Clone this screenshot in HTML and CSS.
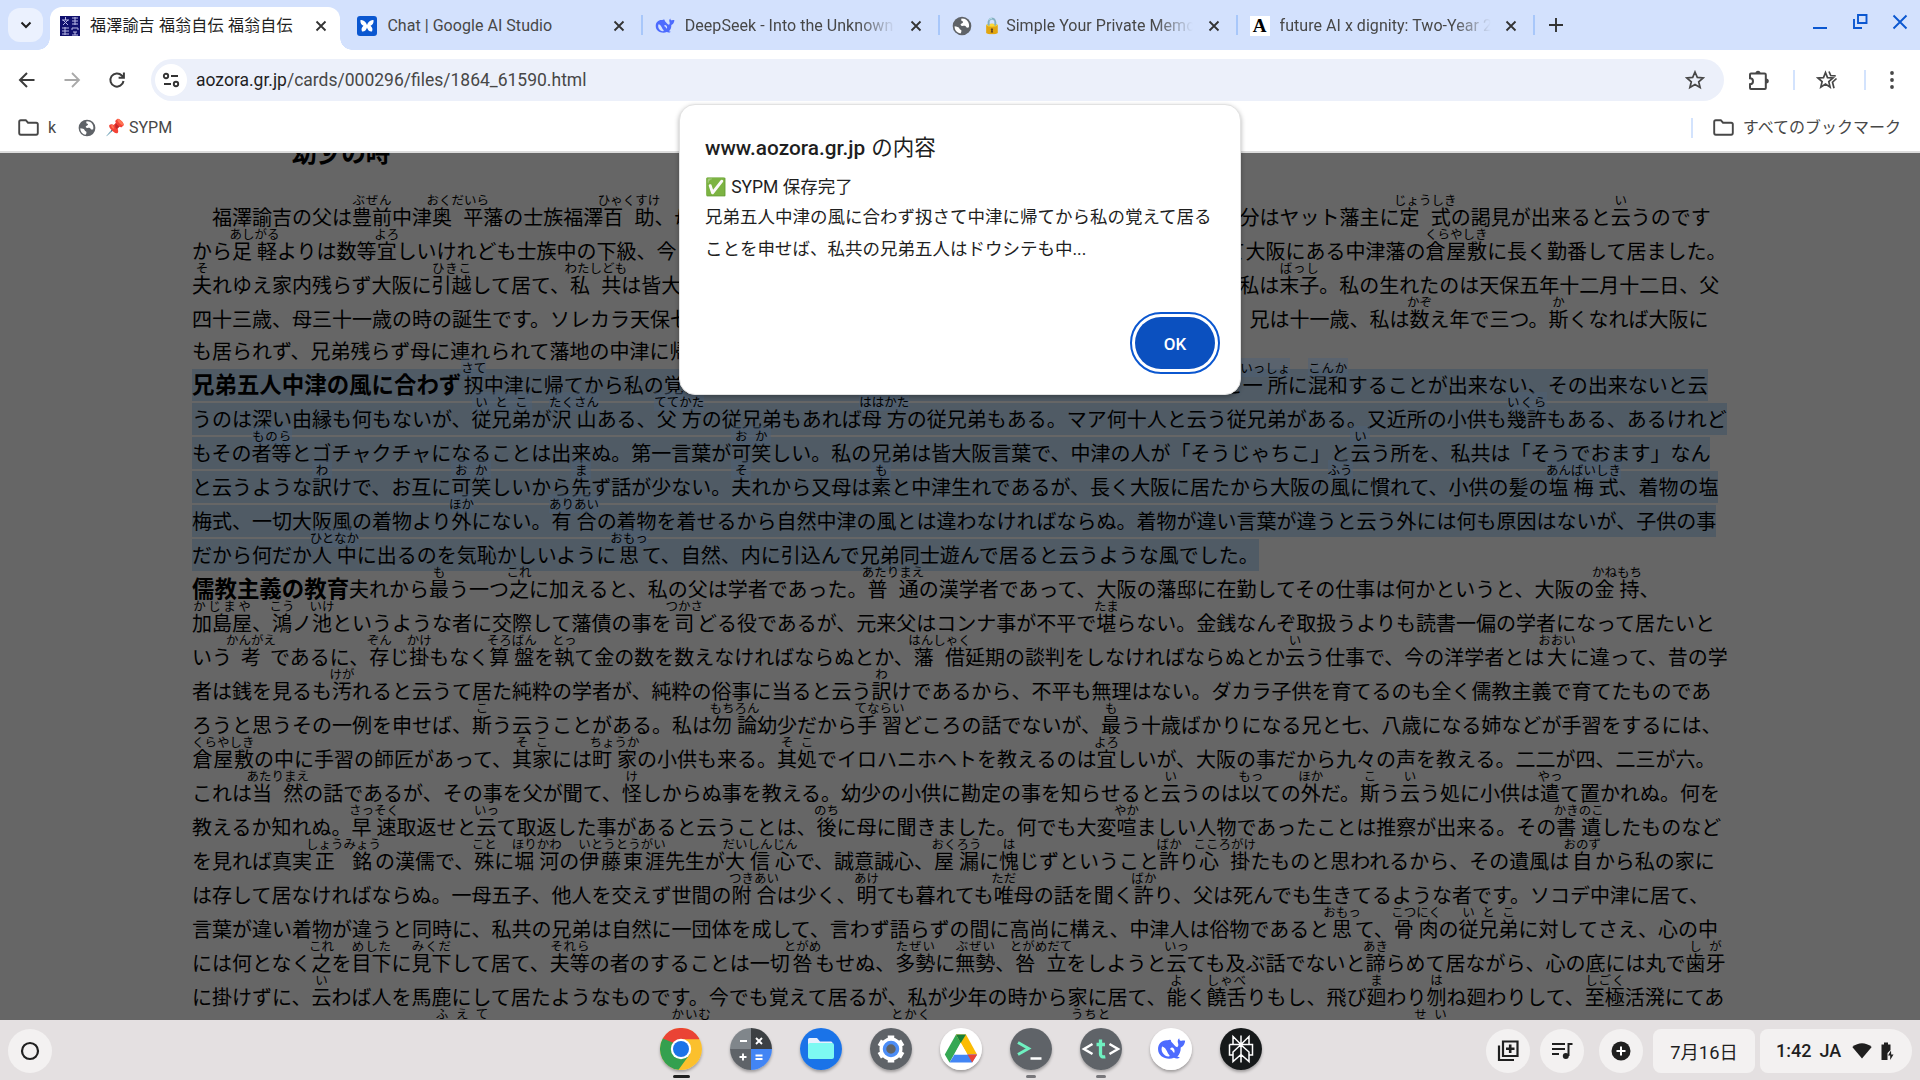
FILE: index.html
```html
<!DOCTYPE html>
<html lang="ja">
<head>
<meta charset="utf-8">
<title>福澤諭吉 福翁自伝</title>
<link rel="stylesheet" href="styles.css">
</head>
<body>
<svg class="defs" width="0" height="0">
  <symbol id="close" viewBox="0 0 12 12"><path d="M1.5 1.5l9 9M10.5 1.5l-9 9" stroke="currentColor" stroke-width="1.8" fill="none"/></symbol>
  <symbol id="globe" viewBox="0 0 20 20"><circle cx="10" cy="10" r="9.3" fill="#5f6368"/><path d="M2.6 10.2c2 .4 4.4.6 4.8 2.200c.3 1.400 2.200.8 2 2.500-.1 1.200-.3 1.700-1 2.500C4.800 16.800 2.400 13.800 2.600 10.200zM9.500 2.600c-.6 1.500-.3 2.500 1 2.700 1.200.2.500 1.900-.8 2.200-1.700.3-1.300 2.300.3 2.400 2 .1 3.200-.6 4 .8.700 1.300 1.800 1 2.900.6.900-3.600-1.200-7.600-4.700-8.500z" fill="#fff"/></symbol>
  <symbol id="folder" viewBox="0 0 21 17"><path d="M2.800 1.200h5l2.200 2.500h8.200q1.600 0 1.600 1.600v8.800q0 1.600-1.600 1.600H2.800q-1.600 0-1.600-1.600V2.800q0-1.600 1.600-1.600z" fill="none" stroke="#474747" stroke-width="1.9"/></symbol>
  <symbol id="whale" viewBox="0 0 28 24"><path d="M1 12C1 6.500 5 3 10 3.500c1 .1 2-.8 3.200-.3.8.5 0 1.300.8 2 2.500 2.300 3.300 4.300 5.500 5 1.400-.8 1.300-2.600.7-4.200-.6-1.800.2-4 1.300-4.500 0 2 1 2.900 2.500 2.500 1.200-.4 2.200-.2 3.200 0-.4 3.200-1.700 5.500-4.300 6.500.1 4-1.200 6.800-3.300 8.800 1 .5 1.700.6 2.500.7-1.500 1.600-4 1.300-5.700.5C10 23 1 20 1 12zM5 9.500c-2 4 1.500 9.500 6 9.700 2 .1 1.200-1 .2-2.200C9.500 14.500 8.500 10.200 5 9.500zm9.500 1c-1.500 0-2 1.200-1.500 2 1.800.3 2.200 2.200 3.500 3.300.8-1 .8-4.800-2-5.300z" fill="#4d6bfe" fill-rule="evenodd"/></symbol>
</svg>

<header class="tabstrip">
  <button class="tabsearch"><svg width="12" height="8" viewBox="0 0 12 8"><path d="M1.500 1.500L6 6l4.500-4.500" fill="none" stroke="#1f1f1f" stroke-width="2"/></svg></button>
  <div class="tab active">
    <svg class="fav" viewBox="0 0 20 20"><rect width="20" height="20" fill="#10106e"/><path d="M2 4h7M5.500 1v3M3 9l5-5M3 4l5 5M12 2h6M12 5h6M12 8h6M15 1v8M2 12h7M2 15h7M5 11v8M2 18h7M12 12h6v2M12 12v2M13 16h4M15 16v3M12 19h6" stroke="#b9b9e6" stroke-width="1" fill="none"/></svg>
    <span class="title">福澤諭吉 福翁自伝 福翁自伝</span><svg class="x"><use href="#close"/></svg>
  </div>
  <div class="tab">
    <svg class="fav" viewBox="0 0 20 20"><rect width="20" height="20" rx="3" fill="#0b57d0"/><path d="M3.500 4c3-.5 5.500 2 6.500 5 1-3 3.500-5.500 6.500-5 .5 3-1 5-3 5.700 1.800 1.300 2.500 3.500 1.500 5.800-2.500.3-4.500-1.500-5-4-.5 2.500-2.500 4.300-5 4-1-2.300-.3-4.500 1.500-5.800-2-.7-3.500-2.700-3-5.700z" fill="#fff"/></svg>
    <span class="title">Chat | Google AI Studio</span><svg class="x"><use href="#close"/></svg>
  </div>
  <div class="tab sep">
    <svg class="fav" viewBox="0 0 28 24"><use href="#whale"/></svg>
    <span class="title fade">DeepSeek - Into the Unknown</span><svg class="x"><use href="#close"/></svg>
  </div>
  <div class="tab sep">
    <svg class="fav" viewBox="0 0 20 20"><use href="#globe"/></svg>
    <span class="title fade">🔒 Simple Your Private Memory</span><svg class="x"><use href="#close"/></svg>
  </div>
  <div class="tab sep last">
    <span class="fav letter">A</span>
    <span class="title fade">future AI x dignity: Two-Year 2025</span><svg class="x"><use href="#close"/></svg>
  </div>
  <svg class="plus" width="14" height="14" viewBox="0 0 14 14"><path d="M7 0v14M0 7h14" stroke="#333" stroke-width="1.900"/></svg>
  <div class="winbtns">
    <svg width="16" height="18" viewBox="0 0 16 18"><path d="M1 15h14" stroke="#0b57d0" stroke-width="2"/></svg>
    <svg width="16" height="18" viewBox="0 0 16 18"><path d="M6 2h8.500v8H6zM2 6v9h8" fill="none" stroke="#0b57d0" stroke-width="1.900"/></svg>
    <svg width="16" height="18" viewBox="0 0 16 18"><path d="M1.500 2.500l13 13M14.500 2.500l-13 13" stroke="#0b57d0" stroke-width="1.900"/></svg>
  </div>
</header>

<div class="toolbar">
  <svg class="nav" viewBox="0 0 18 18"><path d="M9 2L2 9l7 7M2 9h14.500" fill="none" stroke="#3c3c3c" stroke-width="2"/></svg>
  <svg class="nav" viewBox="0 0 18 18"><path d="M9 2l7 7-7 7M16 9H1.500" fill="none" stroke="#a9a9a9" stroke-width="1.800"/></svg>
  <svg class="nav" viewBox="0 0 18 18"><path d="M15.500 10A6.600 6.600 0 1 1 13.800 4.500L15.500 6.200M15.900 1.500v5.300h-5.300" fill="none" stroke="#3c3c3c" stroke-width="2"/></svg>
  <div class="omnibox">
    <span class="siteinfo"><svg width="18" height="16" viewBox="0 0 18 16"><g fill="none" stroke="#333" stroke-width="1.900"><circle cx="4" cy="4" r="2.200"/><path d="M9 4h7M2 12h7"/><circle cx="14" cy="12" r="2.200"/></g></svg></span>
    <span class="url"><b>aozora.gr.jp</b>/cards/000296/files/1864_61590.html</span>
    <svg width="20" height="20" viewBox="0 0 20 20"><path d="M10 2l2.300 5.400 5.900.5-4.500 3.900 1.400 5.700-5.100-3.100-5.100 3.100 1.400-5.700L1.800 7.900l5.900-.5z" fill="none" stroke="#474747" stroke-width="1.700"/></svg>
  </div>
  <div class="tools">
    <svg width="22" height="22" viewBox="0 0 22 22"><path d="M3 4.500h13.500q1.300 0 1.300 1.300V19q0 1-1 1H3q-1 0-1-1v-3.800c4 0 4-6 0-6V5.500q0-1 1-1z" fill="none" stroke="#474747" stroke-width="2"/><path d="M7.500 4.500a2.500 2.800 0 0 1 5 0zM18 9.500a2.800 2.500 0 0 1 0 5z" fill="#474747"/></svg>
    <i></i>
    <svg class="starlist" width="22" height="20" viewBox="0 0 22 20"><path d="M9.500 2.500l2 5.100 5.500.4-4.200 3.600 1.300 5.500-4.600-3-4.700 3 1.300-5.500L2 8l5.500-.4z" fill="none" stroke="#474747" stroke-width="1.700"/><path d="M13 1.500l1.700 4 5 .4M20.500 8.500l-4 3.700 1.500 6" fill="none" stroke="#474747" stroke-width="1.700"/></svg>
    <i></i>
    <svg width="6" height="20" viewBox="0 0 6 20"><g fill="#474747"><circle cx="3" cy="3" r="1.900"/><circle cx="3" cy="10" r="1.900"/><circle cx="3" cy="17" r="1.900"/></g></svg>
  </div>
</div>

<div class="bookmarks">
  <svg width="21" height="17"><use href="#folder"/></svg><span class="bk1">k</span>
  <svg class="bkglobe" width="18" height="18" viewBox="0 0 20 20"><use href="#globe"/></svg><span>📌 SYPM</span>
  <div class="allbk"><i></i><svg width="21" height="17"><use href="#folder"/></svg><span>すべてのブックマーク</span></div>
</div>

<main class="page">
<h3>幼少の時</h3>
<div class="text">
<div class="line">　福澤諭吉の父は<ruby>豊前<rt>ぶぜん</rt></ruby>中津<ruby>奥平<rt>おくだいら</rt></ruby>藩の士族福澤<ruby>百助<rt>ひゃくすけ</rt></ruby>、母は同藩士族、橋本浜右衛門の長女、名を於順と申し、父の身<span class="g1"></span>分はヤット藩主に<ruby>定式<rt>じょうしき</rt></ruby>の謁見が出来ると<ruby>云<rt>い</rt></ruby>うのです</div>
<div class="line">から<ruby>足軽<rt>あしがる</rt></ruby>よりは数等<ruby>宜<rt>よろ</rt></ruby>しいけれども士族中の下級、今日で云えば判任官の家でしょう。藩で云う元締役を勤め<span class="g2"></span>て大阪にある中津藩の<ruby>倉屋敷<rt>くらやしき</rt></ruby>に長く勤番して居ました。</div>
<div class="line"><ruby>夫<rt>そ</rt></ruby>れゆえ家内残らず大阪に<ruby>引越<rt>ひきこ</rt></ruby>して居て、<ruby>私共<rt>わたしども</rt></ruby>は皆大阪で生れたのです。兄弟五人、総領の兄の次に女の子が三人、私は<ruby>末子<rt>ばっし</rt></ruby>。私の生れたのは天保五年十二月十二日、父</div>
<div class="line">四十三歳、母三十一歳の時の誕生です。ソレカラ天保七年六月、父が不幸にして病死。跡に遺るは母一人に子供五人、兄は十一歳、私は<ruby>数<rt>かぞ</rt></ruby>え年で三つ。<ruby>斯<rt>か</rt></ruby>くなれば大阪に</div>
<div class="line plain">も居られず、兄弟残らず母に連れられて藩地の中津に帰りました。</div>
<div class="line sel"><b>兄弟五人中津の風に合わず</b><ruby>扨<rt>さて</rt></ruby>中津に帰てから私の覚えて居ることを申せば、私共の兄弟五人はドウシテも中津人と<ruby>一所<rt>いっしょ</rt></ruby>に<ruby>混和<rt>こんか</rt></ruby>することが出来ない、その出来ないと云</div>
<div class="line sel">うのは深い由縁も何もないが、<ruby>従兄弟<rt>いとこ</rt></ruby>が<ruby>沢山<rt>たくさん</rt></ruby>ある、<ruby>父方<rt>ててかた</rt></ruby>の従兄弟もあれば<ruby>母方<rt>ははかた</rt></ruby>の従兄弟もある。マア何十人と云う従兄弟がある。又近所の小供も<ruby>幾許<rt>いくら</rt></ruby>もある、あるけれど</div>
<div class="line sel">もその<ruby>者等<rt>ものら</rt></ruby>とゴチャクチャになることは出来ぬ。第一言葉が<ruby>可笑<rt>おか</rt></ruby>しい。私の兄弟は皆大阪言葉で、中津の人が「そうじゃちこ」と<ruby>云<rt>い</rt></ruby>う所を、私共は「そうでおます」なん</div>
<div class="line sel">と云うような<ruby>訳<rt>わ</rt></ruby>けで、お互に<ruby>可笑<rt>おか</rt></ruby>しいから<ruby>先<rt>ま</rt></ruby>ず話が少ない。<ruby>夫<rt>そ</rt></ruby>れから又母は<ruby>素<rt>も</rt></ruby>と中津生れであるが、長く大阪に居たから大阪の<ruby>風<rt>ふう</rt></ruby>に慣れて、小供の髪の<ruby>塩梅式<rt>あんばいしき</rt></ruby>、着物の塩</div>
<div class="line sel">梅式、一切大阪風の着物より<ruby>外<rt>ほか</rt></ruby>にない。<ruby>有合<rt>ありあい</rt></ruby>の着物を着せるから自然中津の風とは違わなければならぬ。着物が違い言葉が違うと云う外には何も原因はないが、子供の事</div>
<div class="line sel">だから何だか<ruby>人中<rt>ひとなか</rt></ruby>に出るのを気恥かしいように<ruby>思<rt>おもっ</rt></ruby>て、自然、内に引込んで兄弟同士遊んで居ると云うような風でした。</div>
<div class="line"><b>儒教主義の教育</b>夫れから<ruby>最<rt>も</rt></ruby>う一つ<ruby>之<rt>これ</rt></ruby>に加えると、私の父は学者であった。<ruby>普通<rt>あたりまえ</rt></ruby>の漢学者であって、大阪の藩邸に在勤してその仕事は何かというと、大阪の<ruby>金持<rt>かねもち</rt></ruby>、</div>
<div class="line"><ruby>加島屋<rt>かじまや</rt></ruby>、<ruby>鴻<rt>こう</rt></ruby>ノ<ruby>池<rt>いけ</rt></ruby>というような者に交際して藩債の事を<ruby>司<rt>つかさ</rt></ruby>どる役であるが、元来父はコンナ事が不平で<ruby>堪<rt>たま</rt></ruby>らない。金銭なんぞ取扱うよりも読書一偏の学者になって居たいと</div>
<div class="line">いう<ruby>考<rt>かんがえ</rt></ruby>であるに、<ruby>存<rt>ぞん</rt></ruby>じ<ruby>掛<rt>かけ</rt></ruby>もなく<ruby>算盤<rt>そろばん</rt></ruby>を<ruby>執<rt>とっ</rt></ruby>て金の数を数えなければならぬとか、<ruby>藩借<rt>はんしゃく</rt></ruby>延期の談判をしなければならぬとか<ruby>云<rt>い</rt></ruby>う仕事で、今の洋学者とは<ruby>大<rt>おおい</rt></ruby>に違って、昔の学</div>
<div class="line">者は銭を見るも<ruby>汚<rt>けが</rt></ruby>れると云うて居た純粋の学者が、純粋の俗事に当ると云う<ruby>訳<rt>わ</rt></ruby>けであるから、不平も無理はない。ダカラ子供を育てるのも全く儒教主義で育てたものであ</div>
<div class="line">ろうと思うその一例を申せば、<ruby>斯<rt>こ</rt></ruby>う云うことがある。私は<ruby>勿論<rt>もちろん</rt></ruby>幼少だから<ruby>手習<rt>てならい</rt></ruby>どころの話でないが、<ruby>最<rt>も</rt></ruby>う十歳ばかりになる兄と七、八歳になる姉などが手習をするには、</div>
<div class="line"><ruby>倉屋敷<rt>くらやしき</rt></ruby>の中に手習の師匠があって、<ruby>其家<rt>そこ</rt></ruby>には<ruby>町家<rt>ちょうか</rt></ruby>の小供も来る。<ruby>其処<rt>そこ</rt></ruby>でイロハニホヘトを教えるのは<ruby>宜<rt>よろ</rt></ruby>しいが、大阪の事だから九々の声を教える。二二が四、二三が六。</div>
<div class="line">これは<ruby>当然<rt>あたりまえ</rt></ruby>の話であるが、その事を父が聞て、<ruby>怪<rt>け</rt></ruby>しからぬ事を教える。幼少の小供に勘定の事を知らせると<ruby>云<rt>い</rt></ruby>うのは<ruby>以<rt>もっ</rt></ruby>ての<ruby>外<rt>ほか</rt></ruby>だ。<ruby>斯<rt>こ</rt></ruby>う<ruby>云<rt>い</rt></ruby>う処に小供は<ruby>遣<rt>やっ</rt></ruby>て置かれぬ。何を</div>
<div class="line">教えるか知れぬ。<ruby>早速<rt>さっそく</rt></ruby>取返せと<ruby>云<rt>いっ</rt></ruby>て取返した事があると云うことは、<ruby>後<rt>のち</rt></ruby>に母に聞きました。何でも大変<ruby>喧<rt>やか</rt></ruby>ましい人物であったことは推察が出来る。その<ruby>書遺<rt>かきのこ</rt></ruby>したものなど</div>
<div class="line">を見れば真実<ruby>正銘<rt>しょうみょう</rt></ruby>の漢儒で、<ruby>殊<rt>こと</rt></ruby>に<ruby>堀河<rt>ほりかわ</rt></ruby>の<ruby>伊藤東涯<rt>いとうとうがい</rt></ruby>先生が<ruby>大信心<rt>だいしんじん</rt></ruby>で、誠意誠心、<ruby>屋漏<rt>おくろう</rt></ruby>に<ruby>愧<rt>は</rt></ruby>じずということ<ruby>許<rt>ばか</rt></ruby>り<ruby>心掛<rt>こころがけ</rt></ruby>たものと思われるから、その遺風は<ruby>自<rt>おのず</rt></ruby>から私の家に</div>
<div class="line">は存して居なければならぬ。一母五子、他人を交えず世間の<ruby>附合<rt>つきあい</rt></ruby>は少く、<ruby>明<rt>あけ</rt></ruby>ても暮れても<ruby>唯<rt>ただ</rt></ruby>母の話を聞く<ruby>許<rt>ばか</rt></ruby>り、父は死んでも生きてるような者です。ソコデ中津に居て、</div>
<div class="line">言葉が違い着物が違うと同時に、私共の兄弟は自然に一団体を成して、言わず語らずの間に高尚に構え、中津人は俗物であると<ruby>思<rt>おもっ</rt></ruby>て、<ruby>骨肉<rt>こつにく</rt></ruby>の<ruby>従兄弟<rt>いとこ</rt></ruby>に対してさえ、心の中</div>
<div class="line">には何となく<ruby>之<rt>これ</rt></ruby>を<ruby>目下<rt>めした</rt></ruby>に<ruby>見下<rt>みくだ</rt></ruby>して居て、<ruby>夫等<rt>それら</rt></ruby>の者のすることは一切<ruby>咎<rt>とがめ</rt></ruby>もせぬ、<ruby>多勢<rt>たぜい</rt></ruby>に<ruby>無勢<rt>ぶぜい</rt></ruby>、<ruby>咎立<rt>とがめだて</rt></ruby>をしようと<ruby>云<rt>いっ</rt></ruby>ても及ぶ話でないと<ruby>諦<rt>あき</rt></ruby>らめて居ながら、心の底には丸で<ruby>歯牙<rt>しが</rt></ruby></div>
<div class="line">に掛けずに、<ruby>云<rt>い</rt></ruby>わば人を馬鹿にして居たようなものです。今でも覚えて居るが、私が少年の時から家に居て、<ruby>能<rt>よ</rt></ruby>く<ruby>饒舌<rt>しゃべ</rt></ruby>りもし、飛び<ruby>廻<rt>ま</rt></ruby>わり<ruby>刎<rt>は</rt></ruby>ね廻わりして、<ruby>至極<rt>しごく</rt></ruby>活溌にてあ</div>
<div class="line">りながら、木に登ることが<ruby>不得手<rt>ふえて</rt></ruby>で、水を泳ぐことが<ruby>皆無<rt>かいむ</rt></ruby>出来ぬと云うのも、<ruby>兎角<rt>とかく</rt></ruby>同藩中の子弟と<ruby>打解<rt>うちと</rt></ruby>けて遊ぶことが出来ずに孤立した<ruby>所為<rt>せい</rt></ruby>でしょう。</div>
</div>
</main>

<div class="dialog">
  <h1><b>www.aozora.gr.jp</b><span>の内容</span></h1>
  <p class="ok-line">✅ SYPM 保存完了</p>
  <p>兄弟五人中津の風に合わず扨さて中津に帰てから私の覚えて居る<br>ことを申せば、私共の兄弟五人はドウシテも中...</p>
  <button class="okbtn">OK</button>
</div>

<footer class="shelf">
  <span class="launcher"><svg width="20" height="20" viewBox="0 0 20 20"><circle cx="10" cy="10" r="8" fill="none" stroke="#1f1f1f" stroke-width="2.200"/></svg></span>
  <div class="apps">
    <span class="app on"><svg viewBox="0 0 42 42"><circle cx="21" cy="21" r="21" fill="#fbc02d"/><path d="M21 21L2.800 10.500A21 21 0 0 0 18.500 41.850L30 26z" fill="#34a04f"/><path d="M2.800 10.500A21 21 0 0 1 39.200 10.500L39.200 11.200H21L12 17z" fill="#ea4335"/><path d="M2.800 10.500L11 25.500l4-10z" fill="#34a04f"/><circle cx="21" cy="21" r="10.200" fill="#fff"/><circle cx="21" cy="21" r="8" fill="#1a73e8"/></svg></span>
    <span class="app"><svg viewBox="0 0 42 42"><path d="M21 0A21 21 0 0 0 0 21H21z" fill="#80868b"/><path d="M21 0A21 21 0 0 1 42 21H21z" fill="#3c4043"/><path d="M0 21A21 21 0 0 0 21 42V21z" fill="#5f6368"/><path d="M42 21A21 21 0 0 1 21 42V21z" fill="#4285f4"/><path d="M10 13h7M26 10l6 6M32 10l-6 6M9.500 29h7M13 25.500v7M25.500 27.500h7M25.500 31h7" stroke="#fff" stroke-width="1.900"/></svg></span>
    <span class="app"><svg viewBox="0 0 42 42"><circle cx="21" cy="21" r="21" fill="#1a73e8"/><path d="M8 11.500q0-1.500 1.500-1.500h7.500l3 3.500H31q1.500 0 1.500 1.500v5H8z" fill="#e8f0fe"/><rect x="8" y="15" width="26" height="16" rx="2" fill="#7df9f2"/></svg></span>
    <span class="app"><svg viewBox="0 0 42 42"><circle cx="21" cy="21" r="21" fill="#5f6368"/><circle cx="21" cy="21" r="8.500" fill="none" stroke="#fff" stroke-width="6"/><g stroke="#fff" stroke-width="6.500"><path d="M21 7.500v5M21 29.500v5M9.300 14.250l4.300 2.500M28.400 25.250l4.300 2.500M9.300 27.750l4.300-2.500M28.400 16.750l4.300-2.500"/></g><circle cx="21" cy="21" r="6.500" fill="#5f6368" stroke="#4c8df6" stroke-width="3.500"/></svg></span>
    <span class="app"><svg viewBox="0 0 42 42"><circle cx="21" cy="21" r="21" fill="#fff"/><path d="M16 6.500L4.800 26.500 9.500 34.500 20.700 14.500z" fill="#34a853"/><path d="M16 6.500h10l11 20h-9.500z" fill="#fbbc04"/><path d="M9.500 34.500l5-8H37l-5 8z" fill="#4285f4"/><path d="M37.200 26.500H27.500l4.700 8z" fill="#ea4335"/><path d="M16 6.500h10l-5.300 8.500z" fill="#188038"/><path d="M20.800 15l6.500 11.500H14.500z" fill="#fff"/></svg></span>
    <span class="app run"><svg viewBox="0 0 42 42"><circle cx="21" cy="21" r="21" fill="#5f6368"/><path d="M8 14.500l10.500 6L8 26.500" fill="none" stroke="#6ff0c0" stroke-width="3"/><path d="M20.500 30.500h11" stroke="#fff" stroke-width="2.500"/></svg></span>
    <span class="app run"><svg viewBox="0 0 42 42"><circle cx="21" cy="21" r="21" fill="#5f6368"/><path d="M12.500 16l-8.500 5 8.500 5M29.500 16l8.500 5-8.500 5" fill="none" stroke="#fff" stroke-width="2.500"/><path d="M20.500 11.500v14.500q0 3.500 4.800 2.800M16.500 16.500h8.500" fill="none" stroke="#6ff0c0" stroke-width="3.300"/></svg></span>
    <span class="app"><svg viewBox="0 0 42 42"><circle cx="21" cy="21" r="21" fill="#fff"/><use href="#whale" x="7" y="8.500" width="29" height="25"/></svg></span>
    <span class="app"><svg viewBox="0 0 42 42"><circle cx="21" cy="21" r="21" fill="#16191a"/><path d="M21 7.500v27M13 8.500v8l8 0zM29 8.500v8h-8zM13 8.500l8 8 8-8M9.500 16.500h23v10.500h-3.500M9.500 16.500V27H13M21 16.500l-8 7.500v9.500l8-7V17l8 7v9.500l-8-7" fill="none" stroke="#fff" stroke-width="1.500"/></svg></span>
  </div>
  <div class="tray">
    <span class="rnd"><svg width="24" height="24" viewBox="0 0 24 24"><path d="M7 2.500h14.500V17H7zM3 6.500V21h15" fill="none" stroke="#1f1f1f" stroke-width="2.200"/><path d="M14.200 5.500v8.500M10 9.800h8.500" stroke="#1f1f1f" stroke-width="2.600"/></svg></span>
    <span class="rnd"><svg width="24" height="20" viewBox="0 0 24 20"><path d="M2 3h13M2 8h13M2 13h7" stroke="#1f1f1f" stroke-width="2"/><path d="M18.500 15V3h4" fill="none" stroke="#1f1f1f" stroke-width="2"/><circle cx="15.800" cy="15" r="3" fill="#1f1f1f"/></svg></span>
    <span class="rnd last"><svg width="20" height="20" viewBox="0 0 20 20"><circle cx="10" cy="10" r="9.500" fill="#1f1f1f"/><path d="M10 5.500v9M5.500 10h9" stroke="#fff" stroke-width="2"/></svg></span>
    <span class="pill date">7月16日</span>
    <span class="pill status"><span>1:42</span><span class="ja">JA</span><svg width="20" height="16" viewBox="0 0 20 16"><path d="M10 15.500L.3 4Q10-3.500 19.700 4z" fill="#1f1f1f"/></svg><svg width="14" height="20" viewBox="0 0 14 20"><path d="M4 1.500h4v2h2.500V9L7.500 12v7H1.500V3.500H4z" fill="#1f1f1f"/><path d="M11 9.500l-3 5h2.200v4.500l3.300-5.500h-2.300z" fill="#1f1f1f"/></svg></span>
  </div>
</footer>
</body>
</html>
```
FILE: styles.css
```css
* { box-sizing: border-box; }
body { margin: 0; width: 1920px; height: 1080px; overflow: hidden; display: flex; flex-direction: column; background: #fff; color: #1f1f1f; font-family: Roboto, "Noto Sans CJK JP", "Noto Color Emoji", sans-serif; }
svg { display: block; flex: none; }
button { border: 0; padding: 0; font: inherit; }
.defs { position: absolute; }

.tabstrip { height: 50px; flex: none; background: #d3e1fd; display: flex; align-items: center; padding-left: 8px; }
.tabsearch { width: 35px; height: 34px; margin-right: 7px; border-radius: 12px; background: #ebf1fe; display: grid; place-items: center; }
.tab { width: 297.4px; height: 43px; align-self: flex-end; display: flex; align-items: center; padding: 0 20px 6px 10px; font-size: 16px; color: #474747; position: relative; }
.tab.active { color: #1f1f1f; }
.tab.active::before { content: ""; position: absolute; z-index: 0; left: 0; top: 0; width: 290px; height: 43px; background: #fff; border-radius: 12px 12px 0 0; }
.tab.active::after { content: ""; position: absolute; left: -12px; bottom: 0; width: 314px; height: 12px; background: radial-gradient(circle at 0 0, transparent 11.5px, #fff 12px) left / 12px 12px no-repeat, radial-gradient(circle at 100% 0, transparent 11.5px, #fff 12px) right / 12px 12px no-repeat; }
.tab > * { z-index: 1; }
.tab.sep::before, .tab.last::after { content: ""; position: absolute; left: -4px; top: 8px; width: 2px; height: 20px; background: #a8c7fa; }
.tab.last::after { left: auto; right: 2px; }
.fav { width: 20px; height: 20px; flex: none; margin-right: 10px; }
.letter { background: #fff; color: #000; font: bold 19px/20px "Liberation Serif", serif; text-align: center; }
.title { width: 211px; margin-right: auto; white-space: nowrap; overflow: hidden; line-height: 24px; letter-spacing: .04px; }
.fade { -webkit-mask: linear-gradient(90deg, #000 82%, transparent); mask: linear-gradient(90deg, #000 82%, transparent); }
.active .title { letter-spacing: .2px; }
.x { width: 12px; height: 12px; color: #333; }
.plus { margin-left: 12px; }
.winbtns { margin-left: auto; display: flex; gap: 24px; padding: 0 12px 7px 0; }

.toolbar { height: 60px; flex: none; display: flex; align-items: center; padding-left: 18px; }
.nav { width: 18px; height: 18px; margin-right: 27px; }
.omnibox { width: 1573px; height: 42px; margin-left: -2px; border-radius: 21px; background: #ecf0fa; display: flex; align-items: center; padding: 0 19px 0 4px; }
.siteinfo { width: 32px; height: 32px; border-radius: 16px; background: #fff; display: grid; place-items: center; margin-right: 9px; }
.url { flex: 1; font-size: 17.500px; color: #474747; }
.url b { font-weight: 400; color: #1f1f1f; }
.tools { flex: 1; display: flex; align-items: center; justify-content: space-between; padding: 0 25px 0 24px; }
.starlist { margin: 0 3px 0 -3px; }
i { width: 2px; height: 20px; background: #d3e3fd; }

.bookmarks { height: 43px; flex: none; display: flex; align-items: center; padding: 0 19px 6px 18px; font-size: 16px; color: #474747; border-bottom: 2px solid #dcdcdc; line-height: 24px; }
.bk1 { margin: 0 22px 0 9px; }
.bkglobe { margin-right: 9px; }
.allbk { margin-left: auto; display: flex; align-items: center; }
.allbk i { margin-right: 20px; }
.allbk svg { margin-right: 9px; }

.page { height: 867px; flex: none; overflow: hidden; background: #666; color: #000; font-family: "Noto Sans CJK JP", sans-serif; padding-left: 192px; display: flex; flex-direction: column; }
.page h3 { margin: -20px 0 0 100px; height: 68px; flex: none; font-size: 24.600px; line-height: 36px; }
.text { display: flex; flex-direction: column; align-items: flex-start; font-size: 20px; }
.line { flex: none; box-sizing: content-box; height: 32px; line-height: 32px; padding-top: 20px; margin-top: -20px; border-bottom: 2px solid transparent; white-space: nowrap; background-clip: content-box; }
.plain { margin-top: -22px; }
.line b { font-size: 22.450px; line-height: 20px; }
.sel { background-color: #505b65; }
.sel rt { background: rgba(75, 95, 120, .45); }
rt { font-size: 12.500px; line-height: normal; }
.g1, .g2 { display: inline-block; width: 5px; }
.g2 { width: 50px; }

.dialog { position: absolute; left: 679px; top: 104px; width: 562px; height: 291px; border-radius: 16px; background: #fff; border: 1px solid #e2e2e2; box-shadow: 0 2px 5px rgba(0, 0, 0, .3); padding: 28px 25px; }
.dialog h1 { margin: 0 0 11px; font-size: 20.800px; line-height: 30px; font-weight: 400; }
.dialog h1 b { font-weight: 500; }
.dialog h1 span { margin-left: 6px; font-size: 21.500px; }
.dialog p { margin: 0; font-size: 17.500px; line-height: 32px; white-space: nowrap; }
.dialog .ok-line { line-height: 26px; margin-bottom: 1px; }
.okbtn { position: absolute; right: 25px; bottom: 25px; width: 80px; height: 52px; padding-top: 1px; border-radius: 26px; background: #0b50bf; color: #fff; font-size: 17px; font-weight: 500; outline: 2.500px solid #0b57d0; outline-offset: 3px; }

.shelf { height: 60px; flex: none; background: #e4e0e1; display: flex; align-items: center; position: relative; padding: 1px 8px 0 8px; }
.launcher, .rnd { width: 44px; height: 44px; border-radius: 22px; background: #f3f1f1; display: grid; place-items: center; }
.apps { display: flex; gap: 28px; margin: -4px 0 0 608px; }
.app { width: 42px; height: 42px; border-radius: 21px; box-shadow: 0 2px 3px rgba(0, 0, 0, .3); position: relative; }
.app svg { width: 42px; height: 42px; }
.on::after, .run::after { content: ""; position: absolute; left: 16px; top: 47px; width: 10px; height: 3px; border-radius: 2px; background: #77767a; }
.on::after { left: 13px; width: 17px; background: #1f1f1f; }
.tray { margin-left: auto; display: flex; align-items: center; }
.rnd { margin-right: 10px; }
.rnd.last { margin: 0 10px 0 5px; }
.pill { height: 44px; background: #f3f1f1; display: flex; align-items: center; font-size: 18px; }
.date { width: 102px; justify-content: center; border-radius: 8px; margin: 0 5px 0 0; white-space: nowrap; font-size: 18.300px; }
.status { width: 152px; border-radius: 8px 22px 22px 8px; padding-left: 16px; gap: 8px; font-weight: 500; }
.ja { margin-right: 3px; }
```
